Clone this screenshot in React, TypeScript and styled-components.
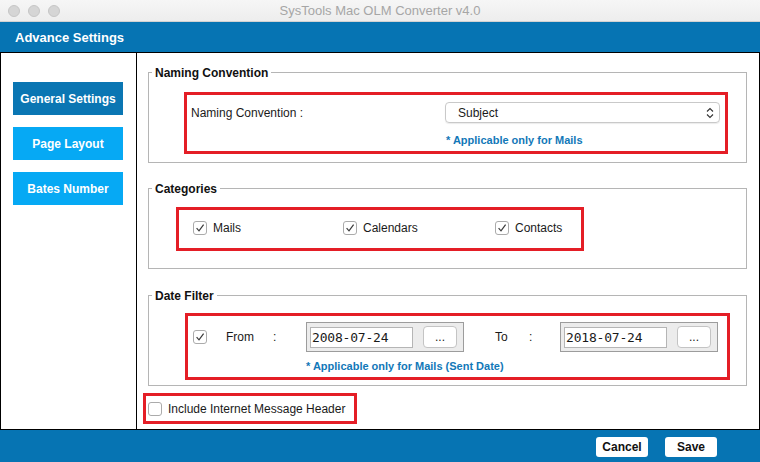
import React from "react";
import styled, {createGlobalStyle} from "styled-components";

const GlobalStyle = createGlobalStyle`
  html, body {
    margin: 0;
    padding: 0;
  }
  body {
    width: 760px;
    height: 462px;
    overflow: hidden;
    font-family: "Liberation Sans", Arial, sans-serif;
    color: #1a1a1a;
  }
`;

const BLUE = "#0674b3";
const RED = "#e41e26";

const Window = styled.div`
  width: 760px;
  height: 462px;
  display: flex;
  flex-direction: column;
  background: #fff;
`;

const TitleBar = styled.div`
  height: 21px;
  border-bottom: 1px solid #d2d2d2;
  background: linear-gradient(#f6f6f6, #ededed);
  display: grid;
  grid-template-columns: 1fr auto 1fr;
  align-items: center;
`;

const Lights = styled.div`
  display: flex;
  gap: 8px;
  padding-left: 8px;
`;

const Light = styled.span`
  width: 12px;
  height: 12px;
  box-sizing: border-box;
  border-radius: 50%;
  background: #d5d5d5;
  border: 1px solid #c6c6c6;
`;

const Title = styled.div`
  font-size: 13px;
  color: #a6a6a6;
`;

const Header = styled.div`
  height: 30px;
  background: ${BLUE};
  color: #fff;
  font-weight: bold;
  font-size: 13px;
  display: flex;
  align-items: center;
  padding-left: 15px;
`;

const Body = styled.div`
  height: 378px;
  box-sizing: border-box;
  border: 1px solid #000;
  display: flex;
`;

const Sidebar = styled.div`
  width: 136px;
  box-sizing: border-box;
  border-right: 1px solid #000;
  padding: 29px 0 0 12px;
  display: flex;
  flex-direction: column;
  gap: 12px;
`;

const SideButton = styled.div<{ $active?: boolean }>`
  width: 110px;
  height: 33px;
  background: ${p => (p.$active ? "#0a76b3" : "#06a9f4")};
  color: #fff;
  font-weight: bold;
  font-size: 12px;
  display: flex;
  align-items: center;
  justify-content: center;
`;

const Main = styled.div`
  flex: 1;
  display: flex;
  flex-direction: column;
  padding: 19px 12px 0 6px;
`;

const Group = styled.div<{ $h: number; $mt: number; $pt: number; $pl: number }>`
  position: relative;
  margin: ${p => p.$mt}px 0 0 5px;
  height: ${p => p.$h}px;
  box-sizing: border-box;
  border: 1px solid #b5b5b5;
  padding: ${p => p.$pt}px 0 0 ${p => p.$pl}px;
`;

const Legend = styled.span`
  position: absolute;
  top: -7px;
  left: 3px;
  padding: 0 3px;
  background: #fff;
  font-weight: bold;
  font-size: 12px;
  line-height: 14px;
  color: #111;
`;

const RedBox = styled.div<{ $w: number; $h: number }>`
  width: ${p => p.$w}px;
  height: ${p => p.$h}px;
  box-sizing: border-box;
  border: 3px solid ${RED};
`;

const NamingGrid = styled.div`
  display: grid;
  grid-template-columns: 254px 275px;
  row-gap: 11px;
  padding: 7px 0 0 4px;
  align-items: center;
`;

const Label = styled.span<{ $w?: number }>`
  font-size: 12px;
  width: ${p => (p.$w ? `${p.$w}px` : "auto")};
  flex-shrink: 0;
`;

const Select = styled.div`
  height: 21px;
  box-sizing: border-box;
  border: 1px solid #c9c9c9;
  border-radius: 4px;
  box-shadow: 0 1px 1px rgba(0, 0, 0, 0.08);
  display: flex;
  align-items: center;
  justify-content: space-between;
  padding: 0 5px 0 12px;
  font-size: 12px;
`;

const Note = styled.span<{ $ml?: number }>`
  font-size: 11px;
  line-height: 13px;
  font-weight: bold;
  color: #1278b8;
  margin-left: ${p => p.$ml || 0}px;
`;

const CheckRow = styled.div`
  display: flex;
  align-items: center;
  height: 100%;
  padding: 0 0 3px 14px;
  box-sizing: border-box;
`;

const CheckItem = styled.label<{ $w?: number }>`
  display: flex;
  align-items: center;
  gap: 6px;
  font-size: 12px;
  width: ${p => (p.$w ? `${p.$w}px` : "auto")};
`;

const Box = styled.span`
  width: 14px;
  height: 14px;
  box-sizing: border-box;
  border: 1px solid #ababab;
  border-radius: 3px;
  background: #fff;
  display: inline-flex;
  align-items: center;
  justify-content: center;
  flex-shrink: 0;
`;

const Check = ({checked}: { checked?: boolean }) => (
    <Box>
        {checked && (
            <svg width="10" height="10" viewBox="0 0 10 10">
                <path d="M1.6 5.2 L4 7.8 L8.6 1.6" fill="none" stroke="#3a3a3a" strokeWidth="1.2"/>
            </svg>
        )}
    </Box>
);

const DateInner = styled.div`
  padding: 6px 0 0 5px;
`;

const DateRow = styled.div`
  display: flex;
  align-items: center;
  height: 30px;
`;

const Spacer = styled.span<{ $w: number }>`
  width: ${p => p.$w}px;
  flex-shrink: 0;
`;

const DateBox = styled.div`
  width: 158px;
  height: 30px;
  box-sizing: border-box;
  border: 1px solid #9c9c9c;
  background: #ececec;
  display: flex;
  align-items: center;
  gap: 10px;
  padding-left: 3px;
  flex-shrink: 0;
`;

const DateInput = styled.div`
  width: 103px;
  height: 21px;
  box-sizing: border-box;
  border: 1px solid #b5b5b5;
  background: #fff;
  font-family: "DejaVu Sans Mono", monospace;
  font-size: 13px;
  line-height: 19px;
  padding-left: 1px;
  letter-spacing: -0.2px;
`;

const DotsButton = styled.div`
  width: 34px;
  height: 22px;
  box-sizing: border-box;
  border: 1px solid #c4c4c4;
  border-radius: 4px;
  background: #fff;
  font-size: 12px;
  display: flex;
  align-items: center;
  justify-content: center;
`;

const DateNote = styled.div`
  display: flex;
  line-height: 13px;
  margin: 8px 0 0 113px;
`;

const IncludeBox = styled(RedBox)`
  margin-top: 7px;
  display: flex;
  align-items: center;
  gap: 6px;
  padding-left: 2px;
  font-size: 12px;
`;

const Footer = styled.div`
  flex: 1;
  background: ${BLUE};
  display: flex;
  justify-content: flex-end;
  align-items: flex-start;
  gap: 17px;
  padding: 7px 43px 0 0;
`;

const FooterButton = styled.div<{ $w: number }>`
  width: ${p => p.$w}px;
  height: 20px;
  background: #fff;
  border-radius: 3px;
  font-weight: bold;
  font-size: 12px;
  color: #111;
  display: flex;
  align-items: center;
  justify-content: center;
`;

const DateField = ({value}: { value: string }) => (
    <DateBox>
        <DateInput>{value}</DateInput>
        <DotsButton>...</DotsButton>
    </DateBox>
);

export default function App() {
    return (
        <Window>
            <GlobalStyle/>
            <TitleBar>
                <Lights>
                    <Light/>
                    <Light/>
                    <Light/>
                </Lights>
                <Title>SysTools Mac OLM Converter v4.0</Title>
                <div/>
            </TitleBar>
            <Header>Advance Settings</Header>
            <Body>
                <Sidebar>
                    <SideButton $active>General Settings</SideButton>
                    <SideButton>Page Layout</SideButton>
                    <SideButton>Bates Number</SideButton>
                </Sidebar>
                <Main>
                    <Group $h={91} $mt={0} $pt={19} $pl={35}>
                        <Legend>Naming Convention</Legend>
                        <RedBox $w={544} $h={62}>
                            <NamingGrid>
                                <Label>Naming Convention :</Label>
                                <Select>
                                    <span>Subject</span>
                                    <svg width="8" height="12" viewBox="0 0 8 12">
                                        <path d="M1 4.5 L4 1.5 L7 4.5 M1 7.5 L4 10.5 L7 7.5" fill="none" stroke="#333"
                                              strokeWidth="1.1"/>
                                    </svg>
                                </Select>
                                <span/>
                                <Note $ml={1}>* Applicable only for Mails</Note>
                            </NamingGrid>
                        </RedBox>
                    </Group>

                    <Group $h={81} $mt={25} $pt={18} $pl={27}>
                        <Legend>Categories</Legend>
                        <RedBox $w={408} $h={44}>
                            <CheckRow>
                                <CheckItem $w={150}><Check checked/>Mails</CheckItem>
                                <CheckItem $w={152}><Check checked/>Calendars</CheckItem>
                                <CheckItem><Check checked/>Contacts</CheckItem>
                            </CheckRow>
                        </RedBox>
                    </Group>

                    <Group $h={91} $mt={26} $pt={17} $pl={36}>
                        <Legend>Date Filter</Legend>
                        <RedBox $w={545} $h={67}>
                            <DateInner>
                                <DateRow>
                                    <Check checked/>
                                    <Spacer $w={19}/>
                                    <Label $w={47}>From</Label>
                                    <Label $w={33}>:</Label>
                                    <DateField value="2008-07-24"/>
                                    <Spacer $w={31}/>
                                    <Label $w={34}>To</Label>
                                    <Label $w={31}>:</Label>
                                    <DateField value="2018-07-24"/>
                                </DateRow>
                                <DateNote>
                                    <Note>* Applicable only for Mails (Sent Date)</Note>
                                </DateNote>
                            </DateInner>
                        </RedBox>
                    </Group>

                    <IncludeBox $w={214} $h={31}>
                        <Check/>
                        Include Internet Message Header
                    </IncludeBox>
                </Main>
            </Body>
            <Footer>
                <FooterButton $w={52}>Cancel</FooterButton>
                <FooterButton $w={52}>Save</FooterButton>
            </Footer>
        </Window>
    );
}
